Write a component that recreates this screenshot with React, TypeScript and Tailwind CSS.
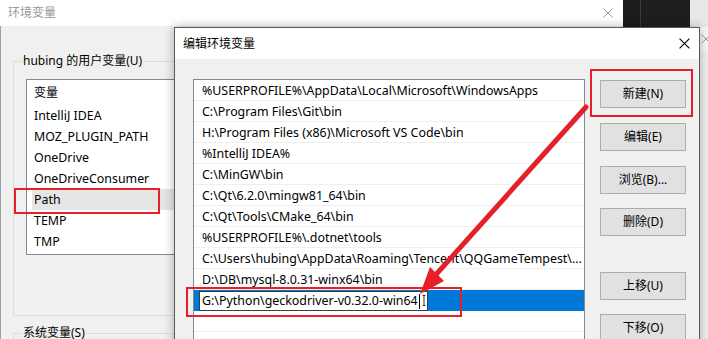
import React from 'react';

const font = { fontFamily: '"Noto Sans", "Noto Sans CJK SC", sans-serif' };

const userVars = ['IntelliJ IDEA', 'MOZ_PLUGIN_PATH', 'OneDrive', 'OneDriveConsumer', 'Path', 'TEMP', 'TMP'];

const paths = [
  '%USERPROFILE%\\AppData\\Local\\Microsoft\\WindowsApps',
  'C:\\Program Files\\Git\\bin',
  'H:\\Program Files (x86)\\Microsoft VS Code\\bin',
  '%IntelliJ IDEA%',
  'C:\\MinGW\\bin',
  'C:\\Qt\\6.2.0\\mingw81_64\\bin',
  'C:\\Qt\\Tools\\CMake_64\\bin',
  '%USERPROFILE%\\.dotnet\\tools',
  'C:\\Users\\hubing\\AppData\\Roaming\\Tencent\\QQGameTempest\\...',
  'D:\\DB\\mysql-8.0.31-winx64\\bin',
];

const Btn = ({ label, className = '' }: { label: string; className?: string }) => (
  <div
    className={`h-[28px] w-[86px] flex items-center justify-center bg-[#e1e1e1] border border-[#adadad] text-[12px] text-black ${className}`}
  >
    {label}
  </div>
);

const CloseIcon = ({ color, size = 10 }: { color: string; size?: number }) => (
  <svg width={size} height={size} viewBox="0 0 10 10" className="shrink-0">
    <path d="M0.5 0.5 L9.5 9.5 M9.5 0.5 L0.5 9.5" stroke={color} strokeWidth="1" />
  </svg>
);

// background "环境变量" window
const EnvWindow = () => (
  <div className="absolute left-0 top-0 w-[623px] h-[339px] flex flex-col overflow-hidden">
    <div className="h-[26px] shrink-0 bg-white flex items-center justify-between pl-[8px] pr-[10px]">
      <span className="text-[12px] text-[#999999]">环境变量</span>
      <CloseIcon color="#9a9a9a" />
    </div>
    <div className="flex-1 shrink-0 bg-[#f0f0f0] border-l border-[#a0a0a0] pl-[12px] pt-[35px]">
      <div className="relative h-[255px] w-[400px] border border-[#dcdcdc] pt-[17px] pl-[12px]">
        <span className="absolute left-[8px] top-[-9px] bg-[#f0f0f0] px-[1px] text-[12px] leading-[16px] text-black">
          hubing 的用户变量(U)
        </span>
        <div className="h-[176px] w-[300px] bg-white border border-[#828790] flex flex-col">
          <div className="h-[25px] shrink-0 flex items-center pl-[7px] text-[12px] text-black">变量</div>
          {userVars.map((v) => (
            <div
              key={v}
              className={`h-[21px] shrink-0 flex items-center ml-[5px] pl-[2px] pt-[1px] text-[12.4px] text-black ${
                v === 'Path' ? 'bg-[#e5e5e5]' : ''
              }`}
            >
              {v}
            </div>
          ))}
        </div>
      </div>
      <div className="relative mt-[17px] h-[40px] w-[400px] border-t border-l border-[#dcdcdc]">
        <span className="absolute left-[8px] top-[-9px] bg-[#f0f0f0] px-[1px] text-[12px] leading-[16px] text-black">
          系统变量(S)
        </span>
      </div>
    </div>
  </div>
);

// foreground "编辑环境变量" dialog
const EditDialog = () => (
  <div className="absolute left-[174px] top-[27px] w-[526px] h-[340px] border border-[#5a5a5a] bg-[#f0f0f0] flex flex-col shadow-[0_0_10px_rgba(0,0,0,0.3)]">
    <div className="h-[31px] shrink-0 bg-white flex items-center justify-between pl-[8px] pr-[9px]">
      <span className="text-[12px] text-black">编辑环境变量</span>
      <CloseIcon color="#000" size={11} />
    </div>
    <div className="flex flex-1 pl-[18px] pt-[20px] gap-[15px]">
      <div className="w-[392px] h-[280px] bg-white border border-[#828790] flex flex-col">
        {paths.map((p) => (
          <div
            key={p}
            className="h-[21px] shrink-0 border-b border-[#efefef] flex items-center pl-[8px] pt-[2px] text-[12.4px] text-black whitespace-nowrap overflow-hidden"
          >
            {p}
          </div>
        ))}
        <div className="h-[21px] shrink-0 bg-[#0078d7] flex items-center pl-[5px]">
          <div className="h-[20px] w-[229px] bg-white border border-[#3c3c3c] flex items-center pl-[2px] pt-[1px] text-[12.4px] text-black whitespace-nowrap">
            G:\Python\geckodriver-v0.32.0-win64
            <span className="ml-[1px] h-[15px] w-[1px] bg-black" />
            <span className="ml-[2px] text-[14px] leading-none font-light">I</span>
          </div>
        </div>
        <div className="h-[21px] shrink-0 border-b border-[#efefef]" />
      </div>
      <div className="flex flex-col pt-[1px]">
        <Btn label="新建(N)" />
        <Btn label="编辑(E)" className="mt-[15px]" />
        <Btn label="浏览(B)..." className="mt-[15px]" />
        <Btn label="删除(D)" className="mt-[14px]" />
        <Btn label="上移(U)" className="mt-[36px]" />
        <Btn label="下移(O)" className="mt-[14px]" />
      </div>
    </div>
  </div>
);

export default function App() {
  return (
    <div className="relative w-[708px] h-[339px] overflow-hidden bg-[#f0f0f0]" style={font}>
      {/* right edge: other windows behind */}
      <div className="absolute left-[623px] top-0 w-[67px] h-[27px] bg-[#1e1e1e] border-l-[17px] border-[#1c1c1c]">
        <div className="h-full w-[1px] bg-[#3c3c3c]" />
      </div>
      <div className="absolute left-[690px] top-0 w-[18px] h-[27px] bg-[#e8e8e8]" />
      <div className="absolute left-[690px] top-[27px] w-[18px] h-[24px] bg-[#f9f9f9] flex items-center pl-[11px] overflow-hidden">
        <CloseIcon color="#999" />
      </div>
      <EnvWindow />
      <EditDialog />

      {/* red annotations */}
      <div className="absolute left-[14px] top-[188px] w-[146px] h-[26px] border-2 border-[#e5202a]" />
      <div className="absolute left-[590px] top-[69px] w-[103px] h-[48px] border-2 border-[#e5202a]" />
      <div className="absolute left-[186px] top-[287px] w-[276px] h-[30px] border-2 border-[#e5202a]" />
      <svg className="absolute left-0 top-0" width="708" height="339">
        <line x1="586" y1="107" x2="432" y2="279" stroke="#e5202a" strokeWidth="5" strokeLinecap="round" />
        <polygon points="420,294 444,281 430,267" fill="#e5202a" />
      </svg>
    </div>
  );
}
